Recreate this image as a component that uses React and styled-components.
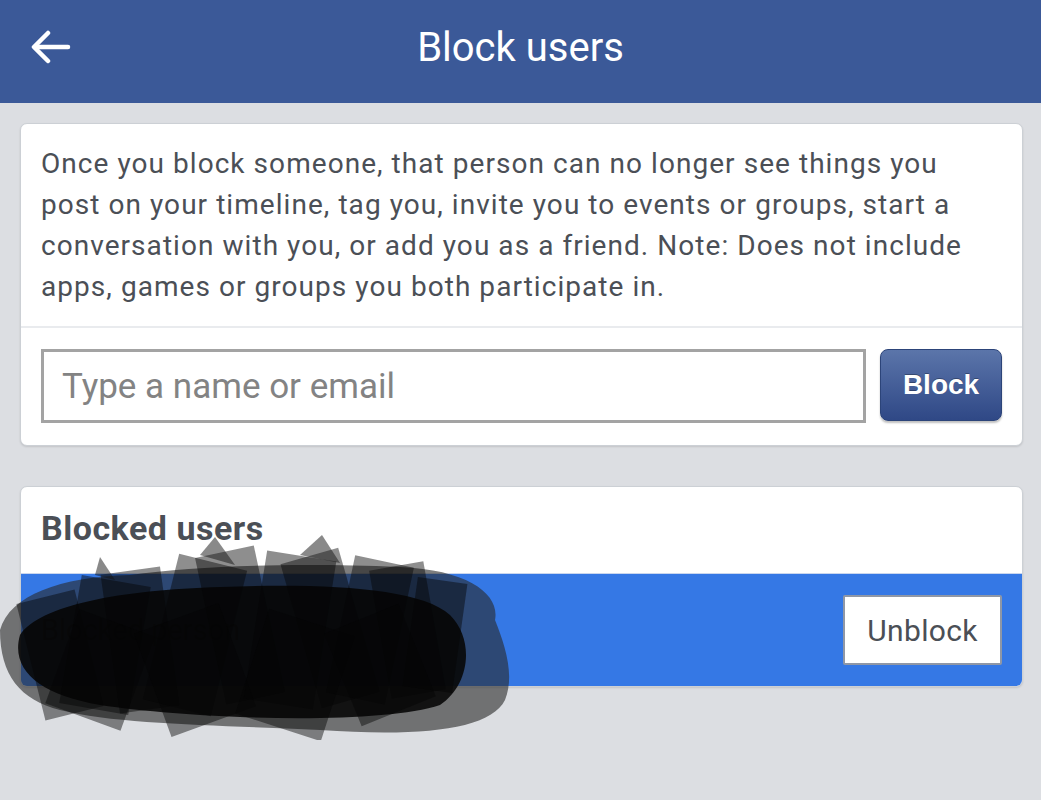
import React from 'react';
import styled, { createGlobalStyle } from 'styled-components';

const GlobalStyle = createGlobalStyle`
  html, body {
    margin: 0;
    padding: 0;
    background: #dcdee2;
    font-family: Roboto, "Noto Sans", sans-serif;
  }
`;

const Page = styled.div`
  position: relative;
  width: 1041px;
  height: 800px;
  overflow: hidden;
  background: #dcdee2;
`;

const Header = styled.header`
  height: 103px;
  background: #3b5998;
  display: flex;
  align-items: center;
  justify-content: center;
  position: relative;
  color: #fff;
`;

const BackButton = styled.button`
  position: absolute;
  left: 28px;
  top: 27px;
  width: 46px;
  height: 40px;
  padding: 0;
  border: 0;
  background: none;
  display: flex;
  align-items: center;
  justify-content: center;
`;

const Title = styled.h1`
  margin: 0 0 8px;
  font-size: 40px;
  font-weight: 400;
`;

const Content = styled.main`
  padding: 20px 18px 0 20px;
  display: flex;
  flex-direction: column;
  gap: 40px;
`;

const Card = styled.section`
  background: #fff;
  border: 1px solid #ccd0d5;
  border-radius: 7px;
  box-shadow: 0 1px 2px rgba(0, 0, 0, 0.12);
  overflow: hidden;
`;

const Intro = styled.p`
  margin: 0;
  padding: 19px 20px 19px 20px;
  font-size: 28px;
  line-height: 41px;
  letter-spacing: 1.05px;
  white-space: nowrap;
  color: #4b4f56;
  border-bottom: 2px solid #e9ebee;
`;

const FormRow = styled.div`
  display: flex;
  align-items: flex-start;
  gap: 14px;
  padding: 21px 20px 22px 20px;
`;

const NameInput = styled.input`
  flex: 1;
  height: 74px;
  box-sizing: border-box;
  border: 3px solid #a3a3a3;
  border-radius: 0;
  padding: 0 18px;
  font-family: Roboto, "Noto Sans", sans-serif;
  font-size: 35px;
  color: #333;
  outline: none;
  &::placeholder {
    color: #838383;
  }
`;

const BlockButton = styled.button`
  width: 122px;
  height: 72px;
  border: 1px solid #2c4479;
  border-radius: 8px;
  background: linear-gradient(#5b75aa, #2f4886);
  box-shadow: 0 2px 2px rgba(0, 0, 0, 0.25);
  color: #fff;
  font-family: "Liberation Sans", Arial, sans-serif;
  font-weight: 700;
  font-size: 28px;
  text-shadow: 0 -1px 0 rgba(0, 0, 0, 0.3);
`;

const SectionTitle = styled.h2`
  margin: 0;
  padding: 20px 20px 24px 20px;
  font-size: 34px;
  line-height: 42px;
  font-weight: 700;
  color: #4b4f56;
  letter-spacing: 0.5px;
`;

const UserRow = styled.div`
  height: 112px;
  background: #3578e5;
  border-top: 1px solid #c9d6ee;
  display: flex;
  align-items: center;
  justify-content: space-between;
  padding: 0 20px;
`;

const UserName = styled.span`
  font-size: 29px;
  color: #1d2129;
`;

const UnblockButton = styled.button`
  width: 159px;
  height: 70px;
  background: #fff;
  border: 2px solid #8f97a6;
  border-radius: 2px;
  font-family: Roboto, "Noto Sans", sans-serif;
  font-size: 30px;
  letter-spacing: 0.3px;
  color: #4b4f56;
`;

const Scribble = styled.svg`
  position: absolute;
  left: 0;
  top: 525px;
  pointer-events: none;
`;

const marks = [
  [30, 70, 60, 120, -14], [70, 55, 70, 130, 10], [110, 45, 60, 140, -8],
  [160, 35, 70, 150, 14], [210, 25, 60, 150, -12], [255, 30, 70, 150, 9],
  [300, 28, 60, 150, -16], [340, 35, 60, 140, 12], [380, 40, 55, 130, -10],
  [410, 55, 50, 110, 8], [60, 95, 80, 100, 20], [150, 90, 90, 110, -20],
  [250, 95, 90, 110, 18], [340, 90, 80, 100, -22],
];

function Redaction() {
  return (
    <Scribble width="520" height="215" viewBox="0 0 520 215">
      <path
        d="M0 105 C10 70 60 52 130 50 C200 40 300 38 400 42 C470 45 500 70 495 95
           C505 120 515 150 505 175 C490 205 420 212 320 205 C220 200 120 200 60 185
           C20 175 0 150 0 105Z"
        fill="rgba(40,40,40,0.6)"
      />
      <path
        d="M20 110 C40 80 120 65 220 62 C320 58 420 62 450 90 C475 115 470 160 440 180
           C380 200 200 195 100 180 C40 170 10 145 20 110Z"
        fill="rgba(8,8,8,0.9)"
      />
      {marks.map(([x, y, w, h, r], i) => (
        <rect
          key={i}
          x={x}
          y={y}
          width={w}
          height={h}
          transform={`rotate(${r} ${x + w / 2} ${y + h / 2})`}
          fill="rgba(5,5,5,0.45)"
        />
      ))}
      <polygon points="200,30 215,12 235,40" fill="rgba(20,20,20,0.5)" />
      <polygon points="300,30 322,10 340,38" fill="rgba(20,20,20,0.5)" />
      <polygon points="95,50 100,32 115,55" fill="rgba(20,20,20,0.5)" />
    </Scribble>
  );
}

export default function App() {
  return (
    <Page>
      <GlobalStyle />
      <Header>
        <BackButton aria-label="Back">
          <svg width="40" height="34" viewBox="0 0 40 34" fill="none" stroke="#fff" strokeWidth="4.5" strokeLinecap="round" strokeLinejoin="round">
            <path d="M37 17H4" />
            <path d="M17 3L3 17l14 14" />
          </svg>
        </BackButton>
        <Title>Block users</Title>
      </Header>
      <Content>
        <Card>
          <Intro>
            Once you block someone, that person can no longer see things you
            <br />
            post on your timeline, tag you, invite you to events or groups, start a
            <br />
            conversation with you, or add you as a friend. Note: Does not include
            <br />
            apps, games or groups you both participate in.
          </Intro>
          <FormRow>
            <NameInput placeholder="Type a name or email" />
            <BlockButton>Block</BlockButton>
          </FormRow>
        </Card>
        <Card>
          <SectionTitle>Blocked users</SectionTitle>
          <UserRow>
            <UserName>Blocked person</UserName>
            <UnblockButton>Unblock</UnblockButton>
          </UserRow>
        </Card>
      </Content>
      <Redaction />
    </Page>
  );
}
